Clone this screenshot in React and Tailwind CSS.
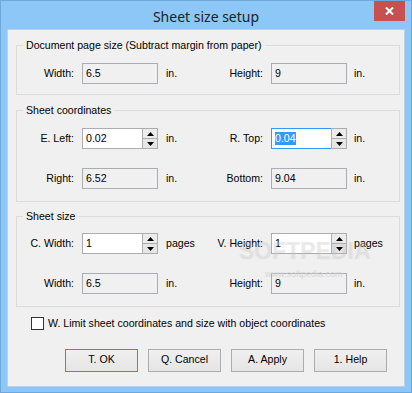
import React from "react";

function Spin({ focused }) {
  return (
    <div className={`ml-auto w-[16px] -my-[1px] -mr-[1px] flex flex-col border border-[#acacac] ${focused ? "" : ""}`}>
      <div className="flex-1 flex items-center justify-center bg-[#ececec] border-b border-[#acacac]">
        <svg width="7" height="4" viewBox="0 0 7 4"><path d="M0 4 L3.5 0 L7 4 Z" fill="#000" /></svg>
      </div>
      <div className="flex-1 flex items-center justify-center bg-[#e6e6e6]">
        <svg width="7" height="4" viewBox="0 0 7 4"><path d="M0 0 L3.5 4 L7 0 Z" fill="#000" /></svg>
      </div>
    </div>
  );
}

function Field({ value, spin, disabled, focused }) {
  return (
    <div
      className={`w-[76px] h-[21px] flex items-stretch border ${
        focused ? "border-[#3399ff]" : "border-[#abadb3]"
      } ${disabled ? "bg-[#f0f0f0]" : "bg-white"}`}
    >
      <div className="flex items-center pl-[3px]">
        {focused ? (
          <span className="bg-[#3399ff] text-white leading-[13px]">{value}</span>
        ) : (
          <span>{value}</span>
        )}
      </div>
      {spin ? <Spin focused={focused} /> : null}
    </div>
  );
}

function Row({ l1, v1, u1, s1, d1, l2, v2, u2, s2, d2, f2 }) {
  return (
    <div className="flex items-center h-[21px]">
      <div className="w-[57px] text-right">{l1}</div>
      <div className="ml-[8px]">
        <Field value={v1} spin={s1} disabled={d1} />
      </div>
      <div className="ml-[8px] w-[40px]">{u1}</div>
      <div className="w-[57px] text-right">{l2}</div>
      <div className="ml-[8px]">
        <Field value={v2} spin={s2} disabled={d2} focused={f2} />
      </div>
      <div className="ml-[7px]">{u2}</div>
    </div>
  );
}

function Group({ title, children, className }) {
  return (
    <fieldset className={`border border-[#dcdcdc] ${className}`}>
      <legend className="ml-[6px] px-[3px] leading-[14px]">{title}</legend>
      {children}
    </fieldset>
  );
}

function Btn({ children, def }) {
  return (
    <div
      className={`w-[73px] h-[23px] flex items-center justify-center border ${
        def ? "border-[#3c8ee0]" : "border-[#acacac]"
      } bg-gradient-to-b from-[#f0f0f0] to-[#e5e5e5]`}
    >
      {children}
    </div>
  );
}

export default function App() {
  return (
    <div className="w-[412px] h-[393px] bg-[#8cc7f7] border border-[#6fa9dc] flex flex-col font-['Liberation_Sans',sans-serif] text-[10.6px] text-black">
      <div className="relative h-[28px] flex items-center justify-center">
        <div className="font-['Noto_Sans',sans-serif] text-[14px] text-[#222] mt-[2px]">Sheet size setup</div>
        <div className="absolute top-0 right-[6px] w-[31px] h-[20px] bg-[#c75050] flex items-center justify-center">
          <svg width="9" height="8" viewBox="0 0 9 8">
            <path d="M1 0.5 L8 7.5 M8 0.5 L1 7.5" stroke="#fff" strokeWidth="2" />
          </svg>
        </div>
      </div>
      <div className="relative mx-[6px] h-[358px] border border-[#b9d1ea] bg-[#f0f0f0] pl-[8px] pr-[4px] pt-[8px] flex flex-col">
        <Group title="Document page size (Subtract margin from paper)" className="pt-[11px] pb-[10px]">
          <Row l1="Width:" v1="6.5" u1="in." d1 l2="Height:" v2="9" u2="in." d2 />
        </Group>
        <Group title="Sheet coordinates" className="mt-[8px] pt-[11px] pb-[12px]">
          <div className="flex flex-col gap-[19px]">
            <Row l1="E. Left:" v1="0.02" u1="in." s1 l2="R. Top:" v2="0.04" u2="in." s2 f2 />
            <Row l1="Right:" v1="6.52" u1="in." d1 l2="Bottom:" v2="9.04" u2="in." d2 />
          </div>
        </Group>
        <Group title="Sheet size" className="mt-[7px] pt-[10px] pb-[12px]">
          <div className="flex flex-col gap-[19px]">
            <Row l1="C. Width:" v1="1" u1="pages" s1 l2="V. Height:" v2="1" u2="pages" s2 />
            <Row l1="Width:" v1="6.5" u1="in." d1 l2="Height:" v2="9" u2="in." d2 />
          </div>
        </Group>
        <div className="flex items-center mt-[9px] ml-[15px]">
          <div className="w-[13px] h-[13px] border border-[#333] bg-white" />
          <div className="ml-[4px]">W. Limit sheet coordinates and size with object coordinates</div>
        </div>
        <div className="flex justify-end gap-[10px] pr-[13px] mt-[17px]">
          <Btn def>T. OK</Btn>
          <Btn>Q. Cancel</Btn>
          <Btn>A. Apply</Btn>
          <Btn>1. Help</Btn>
        </div>
        <div className="absolute left-[231px] top-[204px] font-['Liberation_Sans',sans-serif] font-bold text-[23px] tracking-[0px] text-white/30 [text-shadow:0_0_1px_rgba(0,0,0,0.12)] pointer-events-none">
          SOFTPEDIA
        </div>
        <div className="absolute left-[257px] top-[238px] text-[9px] text-[#d6d6d6] pointer-events-none">
          www.softpedia.com
        </div>
      </div>
    </div>
  );
}
